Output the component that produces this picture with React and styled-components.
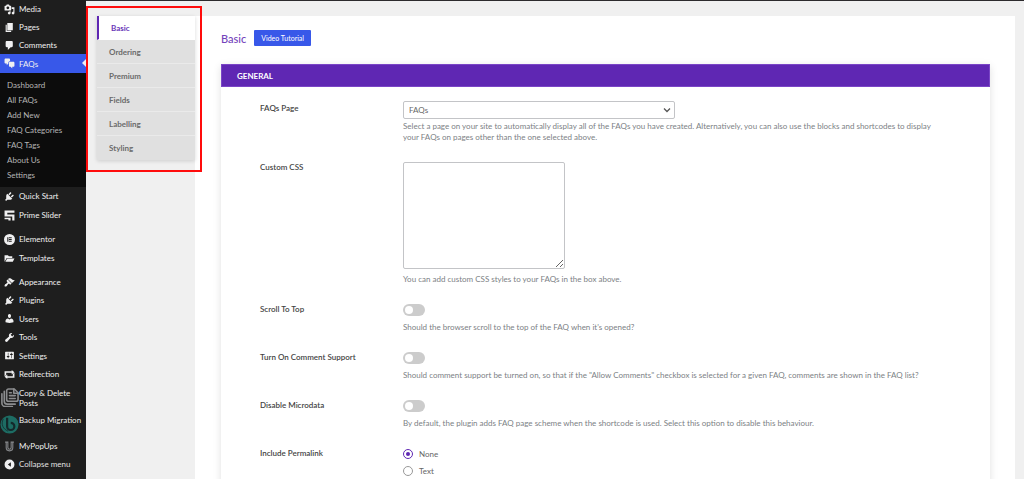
import React from "react";
import styled, { createGlobalStyle } from "styled-components";

const icons = {
  media: "M13 11V4c0-.55-.45-1-1-1h-1.67L9 1H5L3.67 3H2c-.55 0-1 .45-1 1v7c0 .55.45 1 1 1h10c.55 0 1-.45 1-1zM7 4.5c1.38 0 2.5 1.12 2.5 2.5S8.38 9.5 7 9.5 4.5 8.38 4.5 7 5.62 4.5 7 4.5zM14 6h5v10.5c0 1.38-1.12 2.5-2.5 2.5S14 17.88 14 16.5s1.12-2.5 2.5-2.5c.17 0 .34.02.5.05V9h-3V6zm-4 8.05V13h2v3.5c0 1.38-1.12 2.5-2.5 2.5S7 17.88 7 16.5 8.12 14 9.5 14c.17 0 .34.02.5.05z",
  page: "M6 15V2h10v13H6zm-1 1h8v2H3V5h2v11z",
  comments: "M5 2h9c1.1 0 2 .9 2 2v7c0 1.1-.9 2-2 2h-2l-5 5v-5H5c-1.1 0-2-.9-2-2V4c0-1.1.9-2 2-2z",
  chat: "M11 6h-.82C9.07 6 8 7.2 8 8.16V10l-3 3v-3H3c-1.1 0-2-.9-2-2V3c0-1.1.9-2 2-2h6c1.1 0 2 .9 2 2v3zm0 1h6c1.1 0 2 .9 2 2v5c0 1.1-.9 2-2 2h-2v3l-3-3h-1c-1.1 0-2-.9-2-2V9c0-1.1.9-2 2-2z",
  plugin: "M13.11 4.36L9.87 7.6 8 5.73l3.24-3.24c.35-.34 1.05-.2 1.56.32.52.51.66 1.21.31 1.55zm-8 1.77l.91-1.12 9.01 9.01-1.19.84c-.71.71-2.63 1.16-3.82 1.16H6.14L4.9 17.26c-.59.59-1.54.59-2.12 0-.59-.58-.59-1.53 0-2.12l1.24-1.24v-3.88c0-1.13.4-3.19 1.09-3.89zm7.26 3.97l3.24-3.24c.34-.35 1.04-.21 1.55.31.52.51.66 1.21.31 1.55l-3.24 3.25z",
  slider: "M1 1h18v4H6v3h13v11h-4v-7H1V1zM1 14h11v5H8v-2H1v-3z",
  elementor: "M10 0a10 10 0 1 1 0 20a10 10 0 1 1 0-20zM6 6v8h2V6H6zm3 0v1.600h5V6H9zm0 3.200v1.600h5V9.200H9zm0 3.200V14h5v-1.600H9z",
  folder: "M1 16V4h6l2 2h6v3H5L1 16zm4.800-6H19l-3 6H2.500z",
  appearance: "M14.48 11.06L7.41 3.99l1.5-1.5c.5-.56 2.3-.47 3.51.32 1.21.8 1.43 1.28 2.91 2.1 1.18.64 2.45 1.26 4.45.85zm-.71.71L6.7 4.7 4.93 6.47c-.39.39-.39 1.02 0 1.41l1.06 1.06c.39.39.39 1.03 0 1.42-.6.6-1.43 1.11-2.21 1.69-.35.26-.7.53-1.01.84C1.43 14.23.4 16.08 1.4 17.07c.99 1 2.84-.03 4.18-1.36.31-.31.58-.66.85-1.02.57-.78 1.08-1.61 1.69-2.21.39-.39 1.02-.39 1.41 0l1.06 1.06c.39.39 1.02.39 1.41 0z",
  users: "M10 9.25c-2.27 0-2.73-3.44-2.73-3.44C7 4.02 7.82 2 9.97 2c2.16 0 2.98 2.02 2.71 3.81 0 0-.41 3.44-2.68 3.44zm0 2.57L12.72 10c2.39 0 4.52 2.33 4.52 4.53v2.49s-3.65 1.13-7.24 1.13c-3.65 0-7.24-1.13-7.24-1.13v-2.49c0-2.25 1.94-4.48 4.47-4.48z",
  tools: "M16.68 9.77c-1.34 1.34-3.3 1.67-4.95.99l-5.41 6.52c-.99.99-2.59.99-3.58 0s-.99-2.59 0-3.57l6.52-5.42c-.68-1.65-.35-3.61.99-4.95 1.28-1.28 3.12-1.62 4.72-1.06l-2.89 2.89 2.82 2.82 2.86-2.87c.53 1.58.18 3.39-1.08 4.65z",
  settings: "M18 16V4c0-.55-.45-1-1-1H3c-.55 0-1 .45-1 1v12c0 .55.45 1 1 1h14c.55 0 1-.45 1-1zM8 11h1c.55 0 1 .45 1 1s-.45 1-1 1H8v1.5c0 .28-.22.5-.5.5s-.5-.22-.5-.5V13H6c-.55 0-1-.45-1-1s.45-1 1-1h1V5.5c0-.28.22-.5.5-.5s.5.22.5.5V11zm5-2h-1c-.55 0-1-.45-1-1s.45-1 1-1h1V5.5c0-.28.22-.5.5-.5s.5.22.5.5V7h1c.55 0 1 .45 1 1s-.45 1-1 1h-1v5.500c0 .28-.22.5-.5.5s-.5-.22-.5-.5V9z",
  redirect: "M4 7v4l-3 2V4h13V2l5 4-5 4V7H4zm12 6V9l3-2v9H6v2l-5-4 5-4v3h10z",
  collapse: "M10 1a9 9 0 1 1 0 18a9 9 0 1 1 0-18zM12.500 14V6L7 10z",
};

const Icon = ({ name }) => (
  <Glyph viewBox="0 0 20 20" aria-hidden="true">
    <path fillRule="evenodd" d={icons[name]} />
  </Glyph>
);

const CopyIcon = () => (
  <BigGlyph viewBox="0 0 20 20" aria-hidden="true">
    <g fill="none" stroke="#8b8c8e" strokeWidth="1.700" strokeLinejoin="round" strokeLinecap="round">
      <path d="M9 1h6l4 4v7a2 2 0 0 1-2 2H9a2 2 0 0 1-2-2V3a2 2 0 0 1 2-2z" />
      <path d="M14.500 1v4.500H19M10 5h2M10 8h6M10 11h6" />
      <path d="M4.500 3.500v10.500a3 3 0 0 0 3 3H16M2 6v10a3.500 3.500 0 0 0 3.500 3.500H13" />
    </g>
  </BigGlyph>
);

const BackupIcon = () => (
  <BigGlyph viewBox="0 0 20 20" aria-hidden="true">
    <circle cx="10" cy="10" r="9.500" fill="#1d6c63" />
    <path d="M7.500 3v9a3.800 3.800 0 1 0 3.800-3.800" fill="none" stroke="#14292b" strokeWidth="2.300" />
    <path d="M3.500 4c-3 6 0 11 5 13" fill="none" stroke="#14292b" strokeWidth="0.800" />
  </BigGlyph>
);

const PopupIcon = () => (
  <Glyph viewBox="0 0 20 20" aria-hidden="true">
    <path
      d="M2 2h5v10a3 3 0 0 0 6 0V2h5M4 3v9a6 6 0 0 0 12 0V3"
      fill="none"
      stroke="#85878a"
      strokeWidth="2"
    />
  </Glyph>
);

const submenu = ["Dashboard", "All FAQs", "Add New", "FAQ Categories", "FAQ Tags", "About Us", "Settings"];
const tabs = ["Basic", "Ordering", "Premium", "Fields", "Labelling", "Styling"];

const MenuLink = ({ icon, children, ...rest }) => (
  <MenuItem href="#" {...rest}>
    <IconSlot>{typeof icon === "string" ? <Icon name={icon} /> : icon}</IconSlot>
    <span>{children}</span>
  </MenuItem>
);

const ToggleField = ({ id, label, help }) => (
  <Field>
    <Label htmlFor={id}>{label}</Label>
    <div>
      <Toggle id={id} type="checkbox" role="switch" />
      <Help $gap="6px">{help}</Help>
    </div>
  </Field>
);

const App = () => {
  return (
    <Page>
      <GlobalStyle />
      <Sidebar>
        <Group>
          <MenuLink icon="media">Media</MenuLink>
          <MenuLink icon="page">Pages</MenuLink>
          <MenuLink icon="comments">Comments</MenuLink>
          <MenuLink icon="chat" $active $tall>FAQs</MenuLink>
          <Submenu>
            {submenu.map((item) => (
              <SubLink href="#" key={item}>{item}</SubLink>
            ))}
          </Submenu>
        </Group>
        <Group $gap="1px">
          <MenuLink icon="plugin">Quick Start</MenuLink>
          <MenuLink icon="slider">Prime Slider</MenuLink>
        </Group>
        <Group $gap="1px" $space>
          <MenuLink icon="elementor">Elementor</MenuLink>
          <MenuLink icon="folder">Templates</MenuLink>
        </Group>
        <Group $space>
          <MenuLink icon="appearance">Appearance</MenuLink>
          <MenuLink icon="plugin">Plugins</MenuLink>
          <MenuLink icon="users" $tall>Users</MenuLink>
          <MenuLink icon="tools">Tools</MenuLink>
          <MenuLink icon="settings" $tall>Settings</MenuLink>
          <MenuLink icon="redirect">Redirection</MenuLink>
          <MenuLink icon={<CopyIcon />} $large>Copy &amp; Delete Posts</MenuLink>
          <MenuLink icon={<BackupIcon />} $large>Backup Migration</MenuLink>
        </Group>
        <Group>
          <MenuLink icon={<PopupIcon />}>MyPopUps</MenuLink>
          <Collapse type="button">
            <IconSlot><Icon name="collapse" /></IconSlot>
            <span>Collapse menu</span>
          </Collapse>
        </Group>
      </Sidebar>

      <Main>
        <TabColumn>
          <TabList>
            {tabs.map((tab) => (
              <Tab href="#" key={tab} $active={tab === "Basic"}>{tab}</Tab>
            ))}
          </TabList>
          <Highlight />
        </TabColumn>

        <Panel>
          <Heading>
            <Title>Basic</Title>
            <VideoButton type="button">Video Tutorial</VideoButton>
          </Heading>
          <Section>
            <SectionTitle>GENERAL</SectionTitle>
            <Fields>
              <Field>
                <Label htmlFor="page" $select>FAQs Page</Label>
                <div>
                  <SelectWrap>
                    <Select id="page">
                      <option>FAQs</option>
                    </Select>
                    <Chevron viewBox="0 0 8 8" aria-hidden="true">
                      <path d="M1 2.500l3 3 3-3" fill="none" stroke="#555" strokeWidth="1.300" />
                    </Chevron>
                  </SelectWrap>
                  <Help $gap="2px">
                    Select a page on your site to automatically display all of the FAQs you have created. Alternatively, you can also use the blocks and shortcodes to display your FAQs on pages other than the one selected above.
                  </Help>
                </div>
              </Field>
              <Field>
                <Label htmlFor="css">Custom CSS</Label>
                <div>
                  <TextArea id="css" />
                  <Help $gap="5px">You can add custom CSS styles to your FAQs in the box above.</Help>
                </div>
              </Field>
              <ToggleField
                id="scroll"
                label="Scroll To Top"
                help="Should the browser scroll to the top of the FAQ when it's opened?"
              />
              <ToggleField
                id="comment"
                label="Turn On Comment Support"
                help={'Should comment support be turned on, so that if the "Allow Comments" checkbox is selected for a given FAQ, comments are shown in the FAQ list?'}
              />
              <ToggleField
                id="microdata"
                label="Disable Microdata"
                help="By default, the plugin adds FAQ page scheme when the shortcode is used. Select this option to disable this behaviour."
              />
              <Field role="radiogroup" aria-labelledby="permalink">
                <Label as="span" id="permalink">Include Permalink</Label>
                <RadioList>
                  {["None", "Text"].map((option) => (
                    <RadioLabel key={option}>
                      <Radio type="radio" name="permalink" defaultChecked={option === "None"} />
                      {option}
                    </RadioLabel>
                  ))}
                </RadioList>
              </Field>
            </Fields>
          </Section>
        </Panel>
      </Main>
    </Page>
  );
};

const GlobalStyle = createGlobalStyle`
  * {
    box-sizing: border-box;
  }
  body {
    margin: 0;
    background: #f0f0f0;
    font-family: Lato, "Open Sans", sans-serif;
    font-size: 8px;
    color: #555;
  }
  button, select, input, textarea {
    font-family: inherit;
    margin: 0;
  }
  a {
    text-decoration: none;
  }
`;

const Page = styled.div`
  display: flex;
  height: 100vh;
  overflow: hidden;
`;

const Sidebar = styled.nav`
  flex: 0 0 86px;
  background: #1e1e1e;
`;

const Group = styled.div`
  display: flex;
  flex-direction: column;
  gap: ${(props) => props.$gap || "0"};
  margin-top: ${(props) => (props.$space ? "6px" : "0")};
`;

const MenuItem = styled.a`
  position: relative;
  display: flex;
  align-items: ${(props) => (props.$large ? "flex-start" : "center")};
  height: ${(props) => (props.$large ? "27px" : props.$tall ? "19px" : "18px")};
  padding-top: ${(props) => (props.$large ? "5px" : "0")};
  color: #f0f0f0;
  background: ${(props) => (props.$active ? "#3858e9" : "transparent")};
  font-size: 8px;
  line-height: 10px;
  &::after {
    content: "";
    display: ${(props) => (props.$active ? "block" : "none")};
    position: absolute;
    right: 0;
    top: 5px;
    border: 4px solid transparent;
    border-left-width: 0;
    border-right-color: #f0f0f0;
  }
`;

const Collapse = styled.button`
  display: flex;
  align-items: center;
  height: 18px;
  padding: 0;
  border: 0;
  background: none;
  color: #e0e0e0;
  font-size: 8px;
`;

const IconSlot = styled.span`
  flex: 0 0 19px;
  display: flex;
  justify-content: center;
  min-width: 0;
`;

const Glyph = styled.svg`
  width: 11px;
  height: 11px;
  fill: #f0f0f1;
`;

const BigGlyph = styled.svg`
  flex: none;
  width: 19px;
  height: 19px;
`;

const Submenu = styled.div`
  padding: 5px 0 4px 7px;
  background: #0c0c0c;
`;

const SubLink = styled.a`
  display: block;
  color: #b5b5b5;
  font-size: 8px;
  line-height: 15px;
`;

const Main = styled.main`
  flex: 1;
  display: flex;
  min-width: 0;
  padding: 15px 9px 0 11px;
  border-top: 1px solid #2c2a2d;
`;

const TabColumn = styled.div`
  position: relative;
  flex: 0 0 98px;
`;

const TabList = styled.nav`
  box-shadow: 0 1px 4px rgba(0, 0, 0, 0.15);
`;

const Tab = styled.a`
  display: flex;
  align-items: center;
  height: 24px;
  padding-left: 12px;
  border-left: ${(props) => (props.$active ? "2px solid #5f27b3" : "0")};
  border-bottom: 1px solid ${(props) => (props.$active ? "#fff" : "#eaeaea")};
  background: ${(props) => (props.$active ? "#fff" : "#e0e0e0")};
  color: ${(props) => (props.$active ? "#6a35b8" : "#6b6b6b")};
  font-size: 8px;
  font-weight: 700;
  &:last-child {
    border-bottom: 0;
  }
`;

/* red frame drawn over the tab list */
const Highlight = styled.div`
  position: absolute;
  top: -10px;
  right: -7px;
  left: -11px;
  height: 166px;
  border: 2px solid #ff0c0c;
  pointer-events: none;
`;

const Panel = styled.section`
  flex: 1;
  min-width: 0;
  padding: 14px 25px 0 26px;
  background: #fff;
`;

const Heading = styled.header`
  display: flex;
  align-items: center;
  gap: 8px;
  height: 16px;
`;

const Title = styled.h1`
  margin: 0;
  color: #7443bb;
  font-size: 11px;
  font-weight: 500;
`;

const VideoButton = styled.button`
  height: 16px;
  padding: 0 7px;
  border: 0;
  border-radius: 1px;
  background: #3858e9;
  color: #fff;
  font-size: 7px;
`;

const Section = styled.div`
  margin-top: 18px;
  box-shadow: 0 2px 8px rgba(0, 0, 0, 0.12);
`;

const SectionTitle = styled.h2`
  display: flex;
  align-items: center;
  height: 23px;
  margin: 0;
  padding-left: 15px;
  border: 1px solid #7a45c6;
  background: #5f27b3;
  color: #fff;
  font-size: 8px;
  font-weight: 700;
`;

const Fields = styled.div`
  display: flex;
  flex-direction: column;
  gap: 19px;
  padding: 14px 39px;
`;

const Field = styled.div`
  display: grid;
  grid-template-columns: 143px minmax(0, 540px);
  align-items: start;
`;

const Label = styled.label`
  color: #444;
  font-size: 8px;
  font-weight: 600;
  line-height: ${(props) => (props.$select ? "15px" : "11px")};
`;

const Help = styled.p`
  margin: ${(props) => props.$gap} 0 0;
  color: #7c7f85;
  font-size: 8px;
  line-height: 11px;
`;

const SelectWrap = styled.div`
  display: grid;
  align-items: center;
  width: 272px;
`;

const Select = styled.select`
  grid-area: 1 / 1;
  appearance: none;
  width: 100%;
  height: 18px;
  padding: 0 5px;
  border: 1px solid #c3c4c7;
  border-radius: 2px;
  background: #fff;
  color: #666;
  font-size: 8px;
`;

const Chevron = styled.svg`
  grid-area: 1 / 1;
  justify-self: end;
  width: 8px;
  height: 8px;
  margin-right: 4px;
  pointer-events: none;
`;

const TextArea = styled.textarea`
  display: block;
  width: 162px;
  height: 107px;
  border: 1px solid #c3c4c7;
  border-radius: 2px;
  background: #fff;
`;

const Toggle = styled.input`
  appearance: none;
  display: flex;
  align-items: center;
  width: 22px;
  height: 12px;
  padding: 0 2px;
  border-radius: 6px;
  background: #ccc;
  &::before {
    content: "";
    width: 8px;
    height: 8px;
    border-radius: 50%;
    background: #fff;
  }
  &:checked {
    justify-content: flex-end;
    background: #5f27b3;
  }
`;

const RadioList = styled.div`
  display: flex;
  flex-direction: column;
  gap: 6px;
`;

const RadioLabel = styled.label`
  display: flex;
  align-items: center;
  gap: 6px;
  height: 11px;
  color: #666;
  font-size: 8px;
`;

const Radio = styled.input`
  appearance: none;
  display: grid;
  place-items: center;
  width: 10px;
  height: 10px;
  border: 1px solid #999;
  border-radius: 50%;
  background: #fff;
  &:checked {
    border-color: #5f27b3;
  }
  &:checked::before {
    content: "";
    width: 4px;
    height: 4px;
    border-radius: 50%;
    background: #5f27b3;
  }
`;

export default App;
